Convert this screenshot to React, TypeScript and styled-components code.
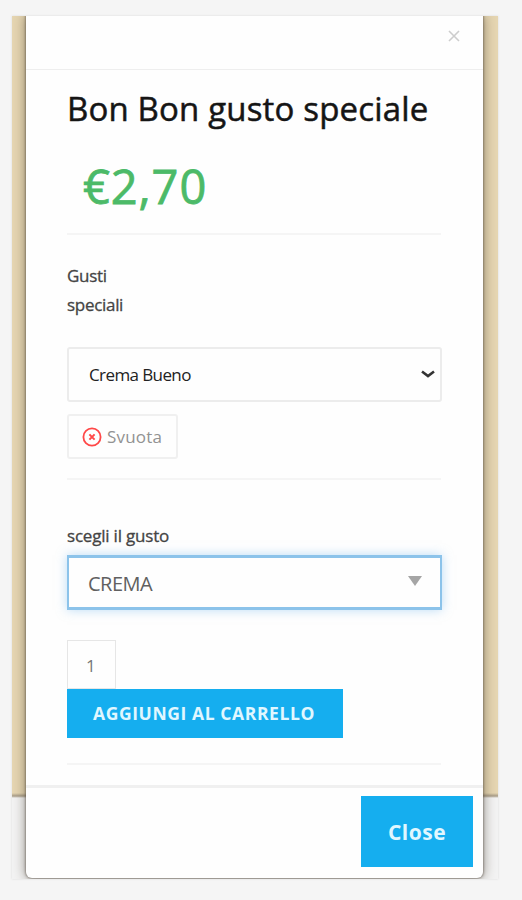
import React from "react";
import styled, { createGlobalStyle } from "styled-components";

const GlobalStyle = createGlobalStyle`
  *, *::before, *::after { box-sizing: border-box; }
  body { margin: 0; background: #f5f5f5; font-family: "Open Sans", "Noto Sans", sans-serif; }
  button { font-family: inherit; border: 0; padding: 0; }
`;

const Page = styled.main`
  height: 900px;
  padding: 16px 24px 21px 12px;
  overflow: hidden;
`;

const Backdrop = styled.div`
  height: 863px;
  padding: 0 15px 1px 14px;
  overflow: hidden;
  background: linear-gradient(#e6d6b2 0 777px, #a99d88 780px, #f3f3f3 782px);
  box-shadow: 0 0 2px #d8d8d8;
`;

const Modal = styled.section`
  display: flex;
  flex-direction: column;
  height: 862px;
  background: #fefefe;
  border-radius: 0 0 6px 6px;
  box-shadow: 0 0 2px 1px rgba(70, 60, 50, 0.4), 0 0 12px 1px rgba(70, 60, 45, 0.5);
`;

const Header = styled.header`
  display: flex;
  justify-content: flex-end;
  height: 54px;
  padding: 14px 23px 0;
  border-bottom: 1px solid #eee;
`;

const CloseIcon = styled.button`
  display: flex;
  width: 12px;
  height: 12px;
  background: none;
  color: #cdcdcd;
`;

const Body = styled.div`
  display: flex;
  flex-direction: column;
  align-items: flex-start;
  height: 715px;
  padding: 19px 42px 0 41px;
`;

const Title = styled.h1`
  margin: 0;
  font-size: 33px;
  font-weight: 400;
  line-height: 40px;
  letter-spacing: 0.16px;
  white-space: nowrap;
  color: #151515;
  -webkit-text-stroke: 0.5px #151515;
`;

const Price = styled.p`
  margin: 28px 0 0 16px;
  font-size: 47px;
  line-height: 58px;
  letter-spacing: 0.9px;
  color: #4cba68;
  -webkit-text-stroke: 0.8px #4cba68;
`;

const Divider = styled.hr<{ $top: number }>`
  width: 100%;
  height: 2px;
  margin: ${(p) => p.$top}px 0 0;
  border: 0;
  background: #f5f5f5;
`;

const Label = styled.label<{ $top: number; $tracking: number }>`
  margin-top: ${(p) => p.$top}px;
  font-size: 17px;
  line-height: 29px;
  letter-spacing: ${(p) => p.$tracking}px;
  color: #444;
  -webkit-text-stroke: 0.3px #444;
`;

const SelectBox = styled.div<{ $top: number; $focus?: boolean }>`
  display: flex;
  align-items: center;
  justify-content: space-between;
  width: 375px;
  height: 55px;
  margin-top: ${(p) => p.$top}px;
  padding: ${(p) => (p.$focus ? "1px 18px 0 19px" : "0 4px 0 20px")};
  border: ${(p) => (p.$focus ? "3px solid #8cc3ea" : "2px solid #ececec")};
  border-width: ${(p) => (p.$focus ? "3px 2px" : "2px")};
  border-radius: ${(p) => (p.$focus ? 0 : 3)}px;
  box-shadow: ${(p) => (p.$focus ? "0 0 10px rgba(120, 185, 240, 0.5)" : "none")};
  font-size: ${(p) => (p.$focus ? 20 : 17)}px;
  letter-spacing: ${(p) => (p.$focus ? -0.5 : -0.6)}px;
  color: ${(p) => (p.$focus ? "#606060" : "#222")};
`;

const ClearButton = styled.button`
  display: flex;
  align-items: center;
  gap: 5px;
  width: 111px;
  height: 45px;
  margin-top: 12px;
  padding-left: 13px;
  border: 2px solid #f0f0f0;
  border-radius: 3px;
  background: #fefefe;
  font-size: 17px;
  letter-spacing: 0.2px;
  color: #929292;
`;

const Quantity = styled.div`
  width: 49px;
  height: 49px;
  margin-top: 30px;
  padding-left: 18px;
  border: 1px solid #e6e6e6;
  font-size: 17px;
  line-height: 49px;
  color: #777;
`;

const AddButton = styled.button`
  width: 276px;
  height: 49px;
  padding: 0 2px 2px 0;
  background: #15aeef;
  color: #e0f7ff;
  font-size: 17.5px;
  font-weight: 700;
  letter-spacing: 0.6px;
  white-space: nowrap;
`;

const Footer = styled.footer`
  display: flex;
  justify-content: flex-end;
  flex: 1;
  padding: 8px 10px 0;
  border-top: 3px solid #f0f0f0;
`;

const FooterButton = styled.button`
  width: 112px;
  height: 71px;
  background: #15aeef;
  color: #e0f7ff;
  font-size: 21px;
  font-weight: 700;
  letter-spacing: 0.5px;
`;

export default function App() {
  return (
    <>
      <GlobalStyle />
      <Page>
        <Backdrop>
          <Modal>
            <Header>
              <CloseIcon aria-label="Close dialog">
                <svg width="12" height="12" viewBox="0 0 12 12" stroke="currentColor" strokeWidth="1.6">
                  <path d="M1 1l10 10M11 1L1 11" />
                </svg>
              </CloseIcon>
            </Header>
            <Body>
              <Title>Bon Bon gusto speciale</Title>
              <Price>€2,70</Price>
              <Divider $top={18} />
              <Label $top={26} $tracking={-0.3}>
                Gusti
                <br />
                speciali
              </Label>
              <SelectBox $top={28}>
                <span>Crema Bueno</span>
                <svg width="16" height="10" viewBox="0 0 16 10" fill="none" stroke="#333" strokeWidth="2.6">
                  <path d="M2 1.5l6 4.5 6-4.5" />
                </svg>
              </SelectBox>
              <ClearButton>
                <svg width="20" height="20" viewBox="0 0 20 20" fill="none" stroke="#ff4848">
                  <circle cx="10" cy="10" r="8.6" strokeWidth="1.8" />
                  <path d="M7.4 7.4l5.2 5.2M12.6 7.4l-5.2 5.2" strokeWidth="2" />
                </svg>
                Svuota
              </ClearButton>
              <Divider $top={19} />
              <Label $top={41} $tracking={-0.2}>scegli il gusto</Label>
              <SelectBox $top={5} $focus>
                <span>CREMA</span>
                <svg width="14" height="14" viewBox="0 0 14 14" fill="#a5a5a5">
                  <path d="M0 0h14L7 10z" />
                </svg>
              </SelectBox>
              <Quantity>1</Quantity>
              <AddButton>AGGIUNGI AL CARRELLO</AddButton>
              <Divider $top={25} />
            </Body>
            <Footer>
              <FooterButton>Close</FooterButton>
            </Footer>
          </Modal>
        </Backdrop>
      </Page>
    </>
  );
}
